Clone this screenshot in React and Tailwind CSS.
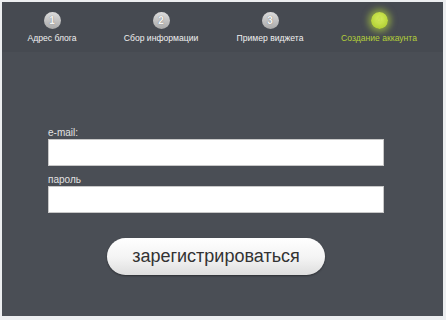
import React from "react";

const steps = [
  { n: "1", label: "Адрес блога" },
  { n: "2", label: "Сбор информации" },
  { n: "3", label: "Пример виджета" },
  { n: "4", label: "Создание аккаунта", active: true },
];

export default function App() {
  return (
    <div
      className="w-[446px] h-[320px] bg-[#eceef0] pt-[2px] pl-[2px] pr-[3px] pb-[4px]"
      style={{ fontFamily: '"Liberation Sans", Arial, sans-serif' }}
    >
      <div className="w-full h-full bg-[#4a4e55] flex flex-col">
        <div className="h-[50px] bg-[#464a51] flex pt-[10px] gap-[9px]">
          {steps.map((s) => (
            <div key={s.n} className="w-[100px] flex flex-col items-center">
              {s.active ? (
                <div className="w-[17px] h-[17px] rounded-full bg-[radial-gradient(circle_at_50%_40%,#d6ef5a,#a6c42a)] shadow-[0_0_6px_3px_rgba(190,225,60,0.55)] flex items-center justify-center text-[10px] font-bold text-[#c8e050]">
                  {s.n}
                </div>
              ) : (
                <div className="w-[17px] h-[17px] rounded-full bg-[linear-gradient(#dcdcdc,#a9a9a9)] flex items-center justify-center text-[10px] font-bold text-[#f4f4f4] [text-shadow:0_0_1px_#666]">
                  {s.n}
                </div>
              )}
              <div
                className={
                  "mt-[4px] text-[8.6px] leading-[11px] whitespace-nowrap " +
                  (s.active ? "text-[#b3cf3a]" : "text-[#f0f0f0]")
                }
              >
                {s.label}
              </div>
            </div>
          ))}
        </div>
        <div className="pl-[46px] pt-[75px] flex flex-col">
          <div className="text-[10px] leading-[12px] text-[#e2e2e2]">e-mail:</div>
          <div className="w-[336px] h-[27px] bg-white border border-[#c8c8c8]" />
          <div className="text-[10px] leading-[12px] text-[#e2e2e2] mt-[8px]">пароль</div>
          <div className="w-[336px] h-[27px] bg-white border border-[#c8c8c8]" />
        </div>
        <div className="pl-[105px] pt-[25px]">
          <div className="w-[218px] h-[37px] rounded-full bg-[linear-gradient(#ffffff,#f3f3f3_55%,#dedede)] shadow-[0_1px_2px_rgba(0,0,0,0.4)] flex items-center justify-center text-[18px] text-[#333]">
            зарегистрироваться
          </div>
        </div>
      </div>
    </div>
  );
}
